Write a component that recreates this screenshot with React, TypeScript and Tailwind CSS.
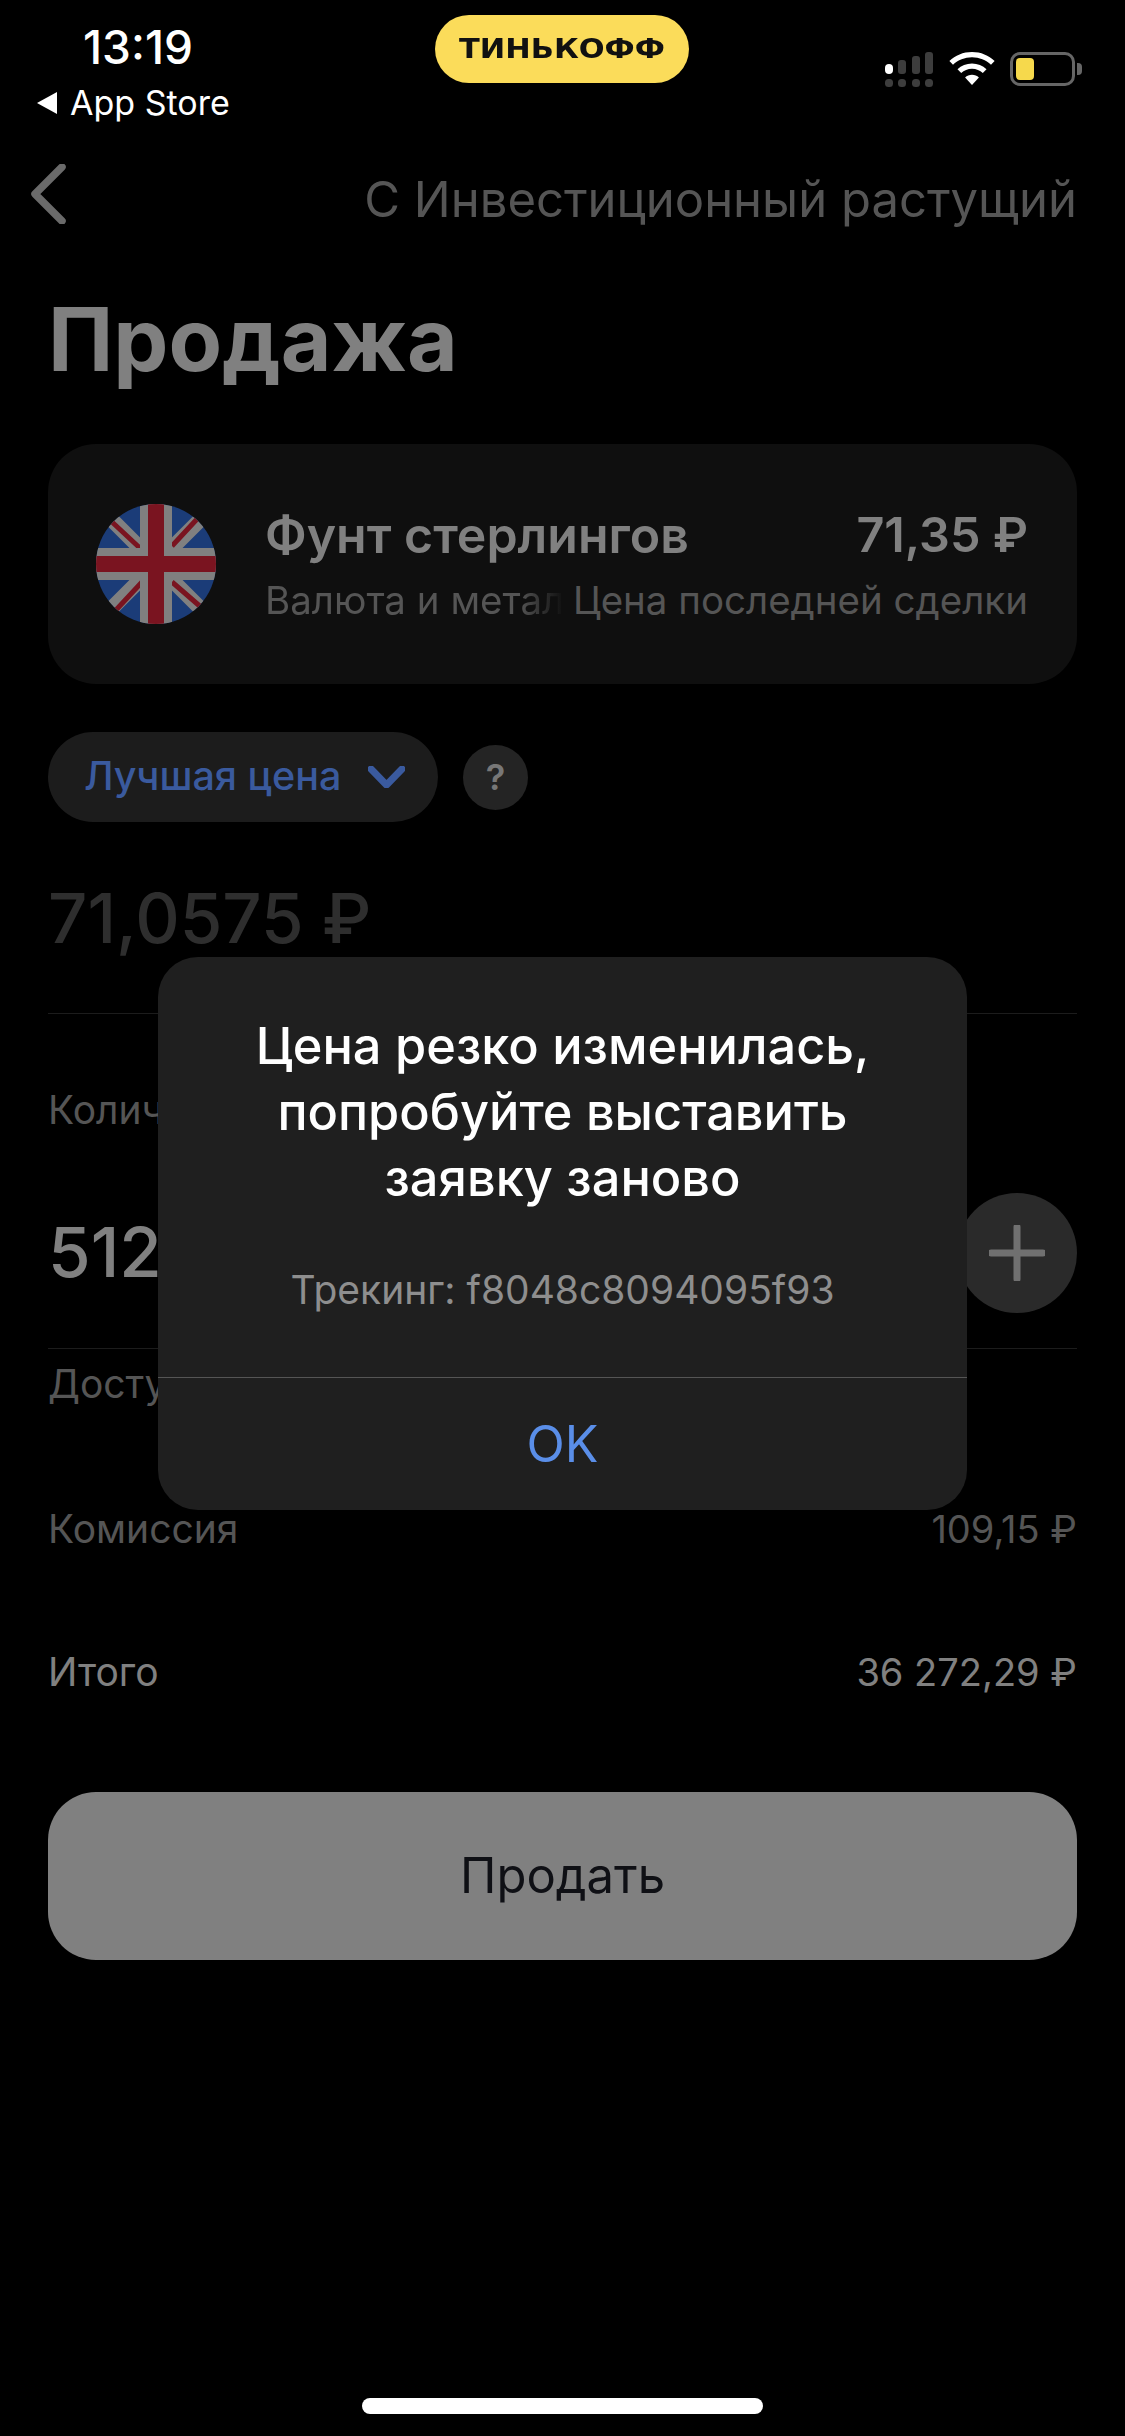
const font = "font-['Inter','Noto_Sans',sans-serif]";

function SignalIcon() {
  return (
    <svg width="49" height="35" viewBox="0 0 49 35" fill="none">
      <rect x="0" y="12" width="8" height="10" rx="4" fill="#fff" />
      <rect x="13" y="8" width="8" height="14" rx="3" fill="#3d3d3d" />
      <rect x="27" y="4" width="8" height="18" rx="3" fill="#3d3d3d" />
      <rect x="40" y="0" width="8" height="22" rx="3" fill="#3d3d3d" />
      {[0, 13, 27, 40].map((x) => (
        <rect key={x} x={x} y="27" width="8" height="8" rx="3.5" fill="#3d3d3d" />
      ))}
    </svg>
  );
}

function WifiIcon() {
  return (
    <svg width="46" height="33" viewBox="0 0 46 33" fill="#fff">
      <path d="M23 0c8.8 0 16.7 3.4 22.600 9l-3.600 3.800C37 8.100 30.300 5.300 23 5.300S9 8.100 4 12.800L.4 9C6.300 3.400 14.200 0 23 0z" />
      <path d="M23 11.500c5.600 0 10.700 2.200 14.500 5.700l-3.700 3.800c-2.800-2.600-6.600-4.200-10.800-4.200s-8 1.600-10.800 4.200l-3.700-3.800c3.800-3.500 8.900-5.700 14.500-5.700z" />
      <path d="M23 22.800c2.700 0 5.100 1 6.900 2.700L23 33l-6.900-7.500c1.800-1.700 4.200-2.700 6.900-2.700z" />
    </svg>
  );
}

function BatteryIcon() {
  return (
    <div className="flex items-center gap-[2px]">
      <div className="h-[34px] w-[65px] rounded-[10px] border-[3px] border-[#666] p-[3px]">
        <div className="h-full w-[18px] rounded-[4px] bg-[#f6d94c]" />
      </div>
      <div className="h-[12px] w-[5px] rounded-r-[4px] bg-[#666]" />
    </div>
  );
}

function UkFlag() {
  return (
    <svg width="120" height="120" viewBox="0 0 120 120" className="shrink-0">
      <defs>
        <clipPath id="flag-circle">
          <circle cx="60" cy="60" r="60" />
        </clipPath>
      </defs>
      <g clipPath="url(#flag-circle)">
        <rect width="120" height="120" fill="#1b3c78" />
        <path d="M8 8 112 112M112 8 8 112" stroke="#808080" strokeWidth="15" />
        <path d="M16 18 46 46M76 78 106 104" stroke="#7a1420" strokeWidth="5" />
        <path d="M102 14 76 42M46 78 20 106" stroke="#7a1420" strokeWidth="5" />
        <rect x="44" width="32" height="120" fill="#808080" />
        <rect y="44" width="120" height="32" fill="#808080" />
        <rect x="52" width="16" height="120" fill="#7a1420" />
        <rect y="52" width="120" height="16" fill="#7a1420" />
      </g>
    </svg>
  );
}

function Row({ label, value, tone }: { label: string; value: string; tone: string }) {
  return (
    <div className={`flex h-[46px] items-center justify-between text-[39px] ${tone}`}>
      <span>{label}</span>
      <span className="text-[38px]">{value}</span>
    </div>
  );
}

export default function App() {
  return (
    <div className={`relative h-[2436px] w-[1125px] overflow-hidden bg-black ${font}`}>
      <header className="relative flex h-[130px] justify-between">
        <div className="pl-[37px] pt-[24px] text-white">
          <div className="ml-[46px] text-[46px] font-medium leading-[46px]">13:19</div>
          <div className="mt-[14px] flex items-center gap-[13px] text-[34px] leading-[38px]">
            <span className="h-0 w-0 border-y-[11px] border-r-[20px] border-y-transparent border-r-white" />
            App Store
          </div>
        </div>
        <div className="absolute left-[435px] top-[15px] flex h-[68px] w-[254px] items-center justify-center rounded-[34px] bg-[#fbdc5a]">
          <span className="origin-center scale-x-[1.17] font-['DejaVu_Sans',sans-serif] text-[26px] font-bold leading-none text-[#111]">
            ТИНЬКОФФ
          </span>
        </div>
        <div className="flex items-start gap-[15px] pr-[43px] pt-[52px]">
          <SignalIcon />
          <WifiIcon />
          <BatteryIcon />
        </div>
      </header>

      <main className="px-[48px]">
        <nav className="mt-[34px] flex h-[60px] items-center justify-between">
          <svg width="38" height="60" viewBox="0 0 38 60" fill="none" className="-ml-[18px]">
            <path d="M32 3 5 30l27 27" stroke="#6a6a6a" strokeWidth="7.500" strokeLinecap="round" strokeLinejoin="round" />
          </svg>
          <span className="relative top-[6px] text-[49px] leading-[60px] text-[#555]">С Инвестиционный растущий</span>
        </nav>

        <h1 className="mt-[71px] text-[87.500px] font-bold leading-[88px] text-[#808080]">Продажа</h1>

        <section className="mt-[61px] flex h-[240px] gap-[49px] rounded-[48px] bg-[#0f0f0f] pl-[48px] pr-[49px] pt-[60px]">
          <UkFlag />
          <div className="min-w-0 flex-1">
            <div className="flex items-center justify-between text-[50px] font-semibold leading-[62px] text-[#808080]">
              <span>Фунт стерлингов</span>
              <span className="text-[48.500px]">71,35 ₽</span>
            </div>
            <div className="mt-[11px] flex justify-between whitespace-nowrap text-[38.500px] leading-[46px] text-[#555]">
              <span className="bg-gradient-to-r from-[#555] from-[85%] to-transparent bg-clip-text text-transparent">
                Валюта и метал
              </span>
              <span>Цена последней сделки</span>
            </div>
          </div>
        </section>

        <div className="mt-[48px] flex items-center gap-[25px]">
          <button className="flex h-[90px] w-[390px] items-center gap-[27px] rounded-[45px] bg-[#1c1c1c] pl-[36px] text-[39.500px] font-medium text-[#3a5a9e]">
            Лучшая цена
            <svg width="37" height="22" viewBox="0 0 37 22" fill="none">
              <path d="M3 3 18.500 19 34 3" stroke="#3a5a9e" strokeWidth="7" strokeLinecap="round" strokeLinejoin="round" />
            </svg>
          </button>
          <span className="flex h-[65px] w-[65px] items-center justify-center rounded-full bg-[#242424] text-[36px] font-semibold text-[#777]">
            ?
          </span>
        </div>

        <div className="mt-[61px] text-[69px] font-medium leading-[70px] text-[#2e2e2e]">71,0575 ₽</div>
        <div className="mt-[60px] h-px bg-[#1c1c1c]" />

        <div className="mt-[73px] h-[46px] text-[39px] leading-[46px] text-[#555]">Количество</div>

        <div className="mt-[60px] flex h-[120px] items-center justify-between">
          <span className="text-[69px] font-medium text-[#808080]">512</span>
          <span className="flex h-[120px] w-[120px] items-center justify-center rounded-full bg-[#2a2a2a]">
            <svg width="56" height="56" viewBox="0 0 56 56" fill="none">
              <path d="M28 2v52M2 28h52" stroke="#707070" strokeWidth="7" strokeLinecap="round" />
            </svg>
          </span>
        </div>

        <div className="mt-[35px] h-px bg-[#1c1c1c]" />
        <div className="mt-[12px] h-[46px] text-[39px] leading-[46px] text-[#555]">Доступно</div>

        <div className="mt-[99px]">
          <Row label="Комиссия" value="109,15 ₽" tone="text-[#555]" />
        </div>
        <div className="mt-[97px]">
          <Row label="Итого" value="36 272,29 ₽" tone="text-[#808080]" />
        </div>

        <button className="mt-[97px] flex h-[168px] w-full items-center justify-center rounded-[48px] bg-[#808080] text-[49px] text-[#0f1015]">
          Продать
        </button>
      </main>

      <div className="absolute left-[158px] top-[957px] h-[553px] w-[809px] rounded-[40px] bg-[#1f1f1f]">
        <div className="h-[420px] pt-[56px] text-center">
          <p className="text-[50.500px] font-medium leading-[66px] text-white">
            Цена резко изменилась,
            <br />
            попробуйте выставить
            <br />
            заявку заново
          </p>
          <p className="mt-[56px] text-[39px] leading-[46px] text-[#8e8e8e]">Трекинг: f8048c8094095f93</p>
        </div>
        <div className="h-px bg-[#555]" />
        <div className="flex h-[132px] items-center justify-center text-[50px] text-[#5a8ee8]">OK</div>
      </div>

      <div className="absolute bottom-[22px] left-[362px] h-[16px] w-[401px] rounded-full bg-white" />
    </div>
  );
}
